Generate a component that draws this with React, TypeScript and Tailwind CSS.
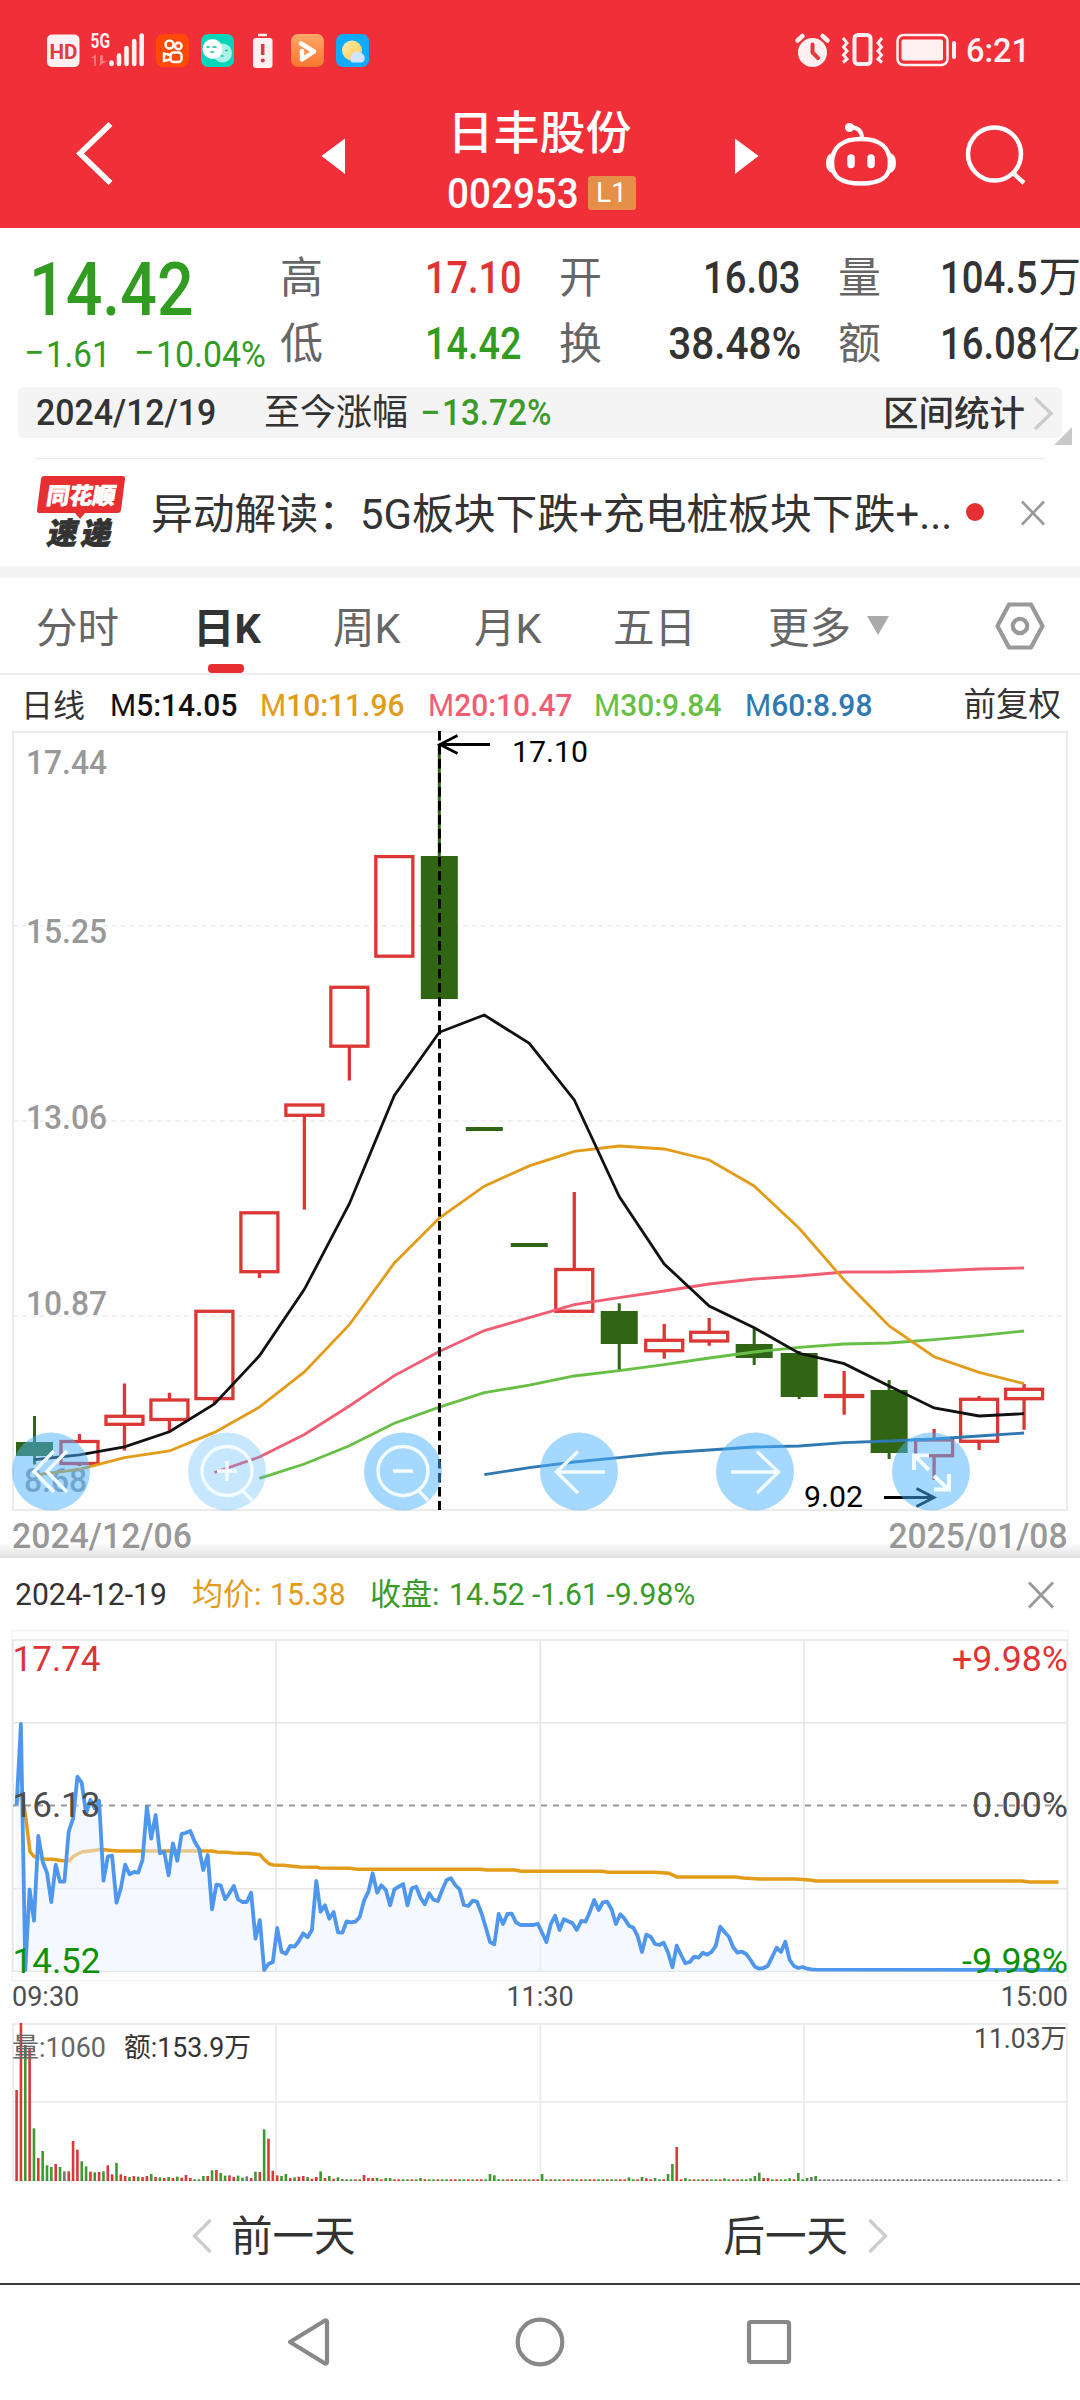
import React from 'react';
import clsx from 'clsx';

const UP = '#db3734';
const DOWN = '#306613';

// [direction, high, body top, body bottom, low]
type Candle = ['up' | 'down', number, number, number, number];

const candles: Candle[] = [
  ['down', 1416, 1442, 1456, 1464.5],
  ['up', 1434, 1441.5, 1463.5, 1466],
  ['up', 1383.6, 1416.3, 1424.3, 1450.6],
  ['up', 1392.7, 1400, 1419.5, 1432],
  ['up', 1311, 1311.3, 1398.6, 1404],
  ['up', 1212.8, 1212.8, 1271.7, 1278],
  ['up', 1105, 1105, 1115.3, 1209.6],
  ['up', 987.3, 987.3, 1046.2, 1080.5],
  ['up', 856.6, 856.6, 956.2, 956.2],
  ['down', 744, 856, 999, 999],
  ['down', 1127, 1127, 1131, 1131],
  ['down', 1243, 1243, 1247, 1247],
  ['up', 1192, 1269.5, 1311.3, 1311.3],
  ['down', 1303.3, 1311, 1344, 1370],
  ['up', 1324, 1340.3, 1350.7, 1358.7],
  ['up', 1318, 1332.3, 1341, 1345.7],
  ['down', 1328.3, 1344, 1358, 1365],
  ['down', 1351, 1353, 1397, 1399],
  ['up', 1371, 1395.5, 1396.5, 1414.7],
  ['down', 1380, 1390, 1453, 1459],
  ['up', 1429, 1440, 1455.7, 1480],
  ['up', 1396, 1399.3, 1441.3, 1450],
  ['up', 1384, 1389.3, 1398.7, 1429.7],
];

const averages = [
  { color: '#2f78b0', start: 10, ys: [1474.7, 1467.7, 1462, 1457.7, 1453, 1450, 1447, 1446, 1442.7, 1441, 1439, 1436, 1433] },
  { color: '#67bf45', start: 5, ys: [1478.4, 1464, 1445.8, 1423.3, 1407.2, 1392.7, 1385.2, 1376, 1370.7, 1364.7, 1358, 1352, 1347.3, 1344, 1343, 1339.7, 1335.7, 1331] },
  { color: '#f15d72', start: 4, ys: [1472.5, 1457, 1434.5, 1406, 1375.6, 1351.5, 1330.6, 1317.7, 1304.7, 1297.7, 1291, 1284, 1279, 1276, 1272, 1272, 1271, 1269, 1268] },
  { color: '#e29c19', start: 0, ys: [1475, 1469.3, 1457.6, 1451, 1432.4, 1407.2, 1371.9, 1324.7, 1263, 1218, 1186.1, 1165.9, 1151.3, 1146, 1149, 1160, 1186, 1228.3, 1280, 1326, 1356.7, 1372.3, 1383.7] },
  { color: '#111', start: 0, ys: [1459.7, 1454.9, 1446.8, 1431.8, 1404, 1355.8, 1289.4, 1203.7, 1095.5, 1032.3, 1015, 1043.4, 1100, 1196.5, 1264, 1306, 1327.7, 1353.3, 1363.7, 1386, 1408, 1416, 1413.7] },
];

const dayX = (i: number) => 34.5 + i * 44.98;
const minuteX = (i: number) => 16.6 + i * 4.343;

// minute prices, in thirds of a pixel from the top of the panel
const quotes = [
  736, 492, 1230, 988, 1082, 828, 905, 938, 1026, 914, 965, 965, 815, 775, 650, 668, 760, 720, 745, 722,
  962, 890, 887, 1028, 985, 914, 943, 936, 938, 900, 740, 836, 765, 880, 876, 946, 850, 902, 822, 818,
  813, 845, 866, 930, 885, 1048, 974, 976, 1018, 1000, 978, 1018, 1026, 1026, 998, 1136, 1080, 1230, 1212, 1206,
  1104, 1175, 1181, 1158, 1160, 1143, 1120, 1132, 1110, 963, 1055, 1036, 1076, 1056, 1117, 1118, 1084, 1087, 1085, 1071,
  1022, 995, 940, 998, 976, 990, 1036, 988, 980, 972, 1036, 985, 980, 1013, 1033, 1000, 1019, 1023, 990, 960,
  955, 975, 988, 1035, 1038, 1022, 1025, 1058, 1100, 1146, 1153, 1062, 1092, 1062, 1061, 1087, 1095, 1095, 1095, 1095,
  1091, 1118, 1146, 1092, 1067, 1110, 1078, 1084, 1090, 1110, 1083, 1085, 1055, 1020, 1050, 1027, 1025, 1048, 1092, 1063,
  1076, 1097, 1103, 1128, 1176, 1124, 1130, 1152, 1155, 1148, 1178, 1222, 1157, 1185, 1210, 1206, 1190, 1193, 1178, 1184,
  1176, 1157, 1100, 1116, 1130, 1162, 1178, 1175, 1182, 1200, 1220, 1226, 1224, 1217, 1190, 1163, 1176, 1145, 1200, 1218,
  1224, 1221, 1226, 1228, 1229,
];

// [x, y] of the average price line
const avgLine = [
  [16.6, 1805], [21, 1790], [25.6, 1816], [30, 1851.7], [34, 1856.5], [43, 1859], [52, 1859.3], [65, 1861], [69, 1861],
  [73, 1856.7], [78, 1853.7], [82, 1852], [99, 1849.7], [104, 1849.7], [117, 1851], [212, 1851], [217, 1852], [227, 1852.3],
  [233, 1853], [247, 1853.3], [260, 1854.7], [264, 1859.3], [269, 1863.7], [273, 1865], [283, 1865.3], [300, 1867],
  [317, 1867.3], [320, 1868], [350, 1868.3], [357, 1869.3], [480, 1869.3], [487, 1870], [515, 1870], [521, 1871.3],
  [602, 1871.3], [608, 1872.3], [654, 1872.3], [669, 1873.3], [677, 1877], [736, 1877], [743, 1878], [760, 1879],
  [795, 1879], [810, 1880], [816, 1881], [1022, 1881], [1029, 1882], [1058.5, 1882],
];

const volumeTops = [
  270, 69, 135, 143, 385, 474, 453, 496, 501, 492, 501, 514, 514, 423, 449, 484, 499, 515, 517, 516,
  514, 496, 523, 489, 523, 528, 531, 528, 530, 531, 528, 522, 531, 532, 534, 531, 534, 530, 533, 525,
  534, 538, 538, 528, 528, 511, 510, 519, 527, 526, 531, 527, 533, 529, 534, 515, 516, 388, 416, 512,
  526, 528, 522, 534, 532, 530, 528, 531, 536, 531, 514, 534, 528, 536, 532, 537,
];
const volumeSides = 'RRGRGRGGGRGKRRRGGRGRGRRGRRGRGRRGRGRGRGRRRGGGRGRGGRRGGKRGRGRRRGGRGRRGRRGRGRGK';
const quietSides = 'RGRRGGRGGRRGG';
const volumeSpikes: Record<number, [string, number]> = {
  80: ['R', 525], 81: ['R', 534], 82: ['R', 534], 83: ['G', 534], 85: ['G', 534], 86: ['G', 534], 93: ['G', 534],
  109: ['G', 522], 110: ['G', 526], 121: ['G', 522], 141: ['G', 532], 144: ['G', 531], 145: ['R', 535], 147: ['G', 534],
  150: ['G', 522], 151: ['G', 492], 152: ['R', 441], 154: ['G', 534], 163: ['G', 535], 169: ['G', 535], 170: ['G', 528],
  171: ['G', 518], 172: ['R', 534], 173: ['R', 534], 178: ['G', 535], 180: ['G', 519], 182: ['G', 534], 183: ['K', 531],
  184: ['G', 528],
};
const sideColor: Record<string, string> = { R: '#d8393a', G: '#3c9a2f', K: '#777' };

const volumeBar = (i: number): [string, number] => {
  if (i < volumeTops.length) return [volumeSides[i], volumeTops[i]];
  if (volumeSpikes[i]) return volumeSpikes[i];
  return [i > 184 ? 'K' : quietSides[i % quietSides.length], 538];
};

const StatusBar: React.FC = () => (
  <div className="h-[100px]">
    <svg width="1080" height="100" fontFamily="Roboto, sans-serif">
      <rect x="47" y="34.500" width="32.500" height="32.500" rx="5" fill="#fff1f2" />
      <text x="49.500" y="58.500" fontSize="21" fontWeight="700" fill="#e23a40" textLength="28" lengthAdjust="spacingAndGlyphs">HD</text>
      <text x="90.500" y="48" fontSize="20.500" fontWeight="700" fill="#fff1f2" textLength="19.500" lengthAdjust="spacingAndGlyphs">5G</text>
      <path d="M94 66V58H91L96 54V66ZM100 55V63L99 66L107 61H103V55Z" fill="#f8757a" />
      <path d="M111.500 62.500V64M119 55.500V64M126.500 48V64M134.200 41V64M141.700 35.500V64" stroke="#fff1f2" strokeWidth="4.600" strokeLinecap="round" />

      <rect x="156" y="34" width="33" height="33" rx="7" fill="#ff4906" />
      <g fill="none" stroke="#fff" strokeWidth="2.400">
        <circle cx="169.500" cy="44.500" r="4" />
        <circle cx="178.300" cy="46" r="3.300" />
        <rect x="170.500" y="52.500" width="11" height="9.500" rx="3" />
        <path d="M170 55L164 53.500V61L170 59.500" />
      </g>

      <rect x="201" y="34" width="33" height="33" rx="7" fill="#04d5b8" />
      <circle cx="222.500" cy="53" r="9.500" fill="#aaf3e6" />
      <circle cx="212.500" cy="49" r="10" fill="#fff" />
      <path d="M206.500 47.500Q208 46 209.500 47.500M212.500 47.500Q214.500 46 216.500 47.500M210.500 51.500Q212 53 214 51.500M225 50.500h2.500M221 56h2.500" fill="none" stroke="#04bfa6" strokeWidth="1.500" />

      <path d="M258 35h9" stroke="#fff1f2" strokeWidth="2.500" />
      <rect x="253" y="38" width="19.500" height="30" rx="3" fill="#fff1f2" />
      <path d="M262.700 44V55" stroke="#e23a40" strokeWidth="3.500" />
      <circle cx="262.700" cy="60.500" r="2" fill="#e23a40" />

      <defs>
        <linearGradient id="play" x1="0" y1="0" x2="0" y2="1">
          <stop offset="0" stopColor="#ffa869" />
          <stop offset="1" stopColor="#f8762d" />
        </linearGradient>
        <linearGradient id="sun" x1="0" y1="0" x2="1" y2="1">
          <stop offset="0" stopColor="#fff0b0" />
          <stop offset="1" stopColor="#ffc64a" />
        </linearGradient>
      </defs>
      <rect x="291" y="34" width="33" height="33" rx="7" fill="url(#play)" />
      <path d="M301 43.500L314 51.500L302 59.500V51" fill="none" stroke="#fff" strokeWidth="4.500" strokeLinecap="round" strokeLinejoin="round" />

      <rect x="336" y="34" width="33" height="33" rx="7" fill="#0fabff" />
      <circle cx="352" cy="50.500" r="10" fill="url(#sun)" />
      <path d="M352 62.500a5 5 0 0 1 0-8a6 6 0 0 1 10 -1a5 5 0 0 1 0 9z" fill="#d5e2fb" />

      <circle cx="812.500" cy="52.500" r="14.500" fill="#fff1f2" />
      <path d="M797.500 40.500L802.500 36M827.500 40.500L822.500 36" stroke="#fff1f2" strokeWidth="4.500" strokeLinecap="round" />
      <path d="M812.500 44.500V52.500L818 58" fill="none" stroke="#e23a40" strokeWidth="4" strokeLinecap="round" strokeLinejoin="round" />

      <rect x="854.500" y="35" width="16" height="29" rx="3.500" fill="none" stroke="#fff1f2" strokeWidth="4" />
      <path d="M843 38L847 43L843.500 47L847 51L843.500 55L847 59L843 62.500M882 38L878 43L881.500 47L878 51L881.500 55L878 59L882 62.500" fill="none" stroke="#fff1f2" strokeWidth="3" />

      <rect x="897.500" y="35" width="50" height="30" rx="6" fill="none" stroke="#fff1f2" strokeWidth="2.500" />
      <rect x="901.500" y="39.500" width="41.500" height="21" rx="2" fill="#fff1f2" />
      <rect x="952" y="41" width="4" height="18" rx="2" fill="#fff1f2" />
      <text x="966" y="62" fontSize="34" fontWeight="500" fill="#fff1f2" textLength="64" lengthAdjust="spacingAndGlyphs">6:21</text>
    </svg>
  </div>
);

const Header: React.FC = () => (
  <header className="h-[228px] bg-[#f12f38] text-white">
    <StatusBar />
    <div className="flex h-[128px]">
      <svg width="440" height="128" viewBox="0 100 440 128">
        <path d="M110.500 124L80 153.500L110.500 183" fill="none" stroke="#fff" strokeWidth="5.500" />
        <path d="M321.500 156L345 138.500V174Z" fill="#fff" />
      </svg>
      <div className="w-[202px] flex flex-col items-center">
        <div className="mt-[7px] -ml-[3px] h-[52px] leading-[52px] text-[46px] font-medium whitespace-nowrap">日丰股份</div>
        <div className="mt-[14px] h-[38px] flex items-start">
          <span className="w-[130px] h-9 text-[42px] leading-[42px] font-medium">
            <span className="inline-block origin-left scale-x-[.92]">002953</span>
          </span>
          <span className="ml-[11px] mt-[3px] w-12 h-[34px] rounded-[3px] bg-[#e58f49] text-[28px] leading-[34px] text-center">L1</span>
        </div>
      </div>
      <svg width="438" height="128" viewBox="642 100 438 128" fill="none" stroke="#fff">
        <path d="M735 138.500L758.500 156L735 174Z" fill="#fff" stroke="none" />
        <path d="M861 139C879 139 890 147 890 163C890 178 880 183.500 861 183.500C842 183.500 832 178 832 163C832 147 843 139 861 139Z" strokeWidth="4.500" />
        <path d="M862 139C862 131 858 127 850 127" strokeWidth="4" />
        <circle cx="849.500" cy="127.500" r="4.500" fill="#fff" stroke="none" />
        <path d="M832 154C825 155 825 170 832 172ZM890 154C897 155 897 170 890 172Z" fill="#fff" strokeWidth="1.500" />
        <path d="M851 158V164.500M871 158V164.500" strokeWidth="7.500" strokeLinecap="round" />
        <ellipse cx="994.500" cy="154" rx="26.500" ry="26.500" strokeWidth="4.500" />
        <path d="M1013 173L1024 183" strokeWidth="4.500" />
      </svg>
    </div>
  </header>
);

interface Stat {
  label: string;
  value: string;
  unit?: string;
  style: string;
}

const stats: Stat[][] = [
  [
    { label: '高', value: '17.10', style: 'text-[#e03434] scale-x-[.85]' },
    { label: '低', value: '14.42', style: 'text-[#329b21] scale-x-[.85]' },
  ],
  [
    { label: '开', value: '16.03', style: 'text-[#333] scale-x-[.86]' },
    { label: '换', value: '38.48%', style: 'text-[#333] scale-x-[.91]' },
  ],
  [
    { label: '量', value: '104.5', unit: '万', style: 'text-[#333] scale-x-[.86]' },
    { label: '额', value: '16.08', unit: '亿', style: 'text-[#333] scale-x-[.86]' },
  ],
];

const StatCell: React.FC<Stat> = ({ label, value, unit, style }) => (
  <div className="h-[66px] flex items-center">
    <span className="mr-auto text-[43px] text-[#666]">{label}</span>
    <span className={clsx('text-[44.5px] font-medium whitespace-nowrap origin-right', style)}>{value}</span>
    {unit && <span className="ml-px text-[42.5px] text-[#333] -mr-px">{unit}</span>}
  </div>
);

const Quote: React.FC = () => (
  <section className="h-[159px] flex">
    <div className="w-[279px] shrink-0 text-[#329b21]">
      <div className="mt-[19px] ml-[29px] h-[86px] leading-[84px] text-[75px] font-medium origin-left scale-x-[.86]">14.42</div>
      <div className="flex h-[44px] leading-[44px] ml-[24px] text-[36px]">
        <span className="w-[110px] flex"><i className="not-italic w-[22px] -mt-[2px]">−</i><span className="origin-left scale-x-[.92]">1.61</span></span>
        <span className="flex"><i className="not-italic w-[22px] -mt-[2px]">−</i><span className="origin-left scale-x-[.94]">10.04%</span></span>
      </div>
    </div>
    <div className="mt-[17px] flex gap-[37px] pl-px">
      {stats.map((column) => (
        <div key={column[0].label} className="w-[242px]">
          {column.map((s) => (
            <StatCell key={s.label} {...s} />
          ))}
        </div>
      ))}
    </div>
  </section>
);

const RangeBar: React.FC = () => (
  <section className="relative h-[72px] px-[18px]">
    <div className="h-[51px] rounded-md bg-[#f4f4f4] flex items-center text-[#333] pl-[18px] pr-2">
      <span className="w-[228px] text-[36px] font-medium"><span className="inline-block origin-left scale-x-[.94]">2024/12/19</span></span>
      <span className="text-[36px] whitespace-nowrap">至今涨幅</span>
      <span className="ml-[12px] text-[36px] font-medium text-[#3a9b2a] flex"><i className="not-italic w-[22px]">−</i><span className="origin-left scale-x-[.925]">13.72%</span></span>
      <span className="ml-auto mr-[5px] mt-[5px] text-[35.500px] font-medium">区间统计</span>
      <svg width="24" height="36" fill="none"><path d="M5 3L21 18.500L5 34" stroke="#ccc" strokeWidth="3.500" /></svg>
    </div>
    <svg className="absolute left-[1054px] top-[40px]" width="18" height="18"><path d="M18 0V18H0Z" fill="#c9c9c9" /></svg>
    <div className="mx-[18px] mt-5 h-px bg-[#e8e8e8]" />
  </section>
);

const News: React.FC = () => (
  <section className="h-[107px] flex items-center text-[#333]">
    <svg className="ml-9 shrink-0" width="92" height="80" viewBox="36 473 92 80" fontFamily="'Noto Sans CJK SC', sans-serif" fontWeight="900">
      <path d="M44.500 476H122Q125.500 476 125 479L121 510Q120.500 513 117.500 513H85L80 519L75 513H40Q36.500 513 37 510L41 479Q41.500 476 44.500 476Z" fill="#e72e30" />
      <text transform="translate(45.500 503.500) skewX(-9)" fontSize="23" fill="#fff" stroke="#fff" strokeWidth=".6" textLength="69">同花顺</text>
      <text transform="translate(46 544) skewX(-12)" fontSize="30" fill="#333" stroke="#333" strokeWidth=".9" textLength="64">速递</text>
    </svg>
    <span className="ml-[23px] w-[800px] mt-[5px] text-[41.8px] whitespace-nowrap">异动解读：5G板块下跌+充电桩板块下跌+...</span>
    <span className="ml-[15px] -mt-px size-[18px] rounded-full bg-[#e72e30]" />
    <svg className="ml-[36px]" width="26" height="26" fill="none"><path d="M2 1.500L24 24.500M24 1.500L2 24.500" stroke="#999" strokeWidth="2.600" /></svg>
  </section>
);

const tabs = [
  { label: '分时', width: 'w-[157px]' },
  { label: '日K', width: 'w-[140px]', active: true },
  { label: '周K', width: 'w-[141px]' },
  { label: '月K', width: 'w-[139px]' },
  { label: '五日', width: 'w-[155px]' },
  { label: '更多', width: 'w-[98px]' },
];

const Tabs: React.FC = () => (
  <nav className="h-[97px] border-b-2 border-[#ececec] flex items-center pl-[36px] text-[41.5px] text-[#666]">
    {tabs.map((tab) => (
      <div key={tab.label} className={clsx('relative shrink-0 whitespace-nowrap h-full leading-[101px]', tab.width, tab.active && 'font-bold text-[#333]')}>
        {tab.label}
        {tab.active && <span className="absolute left-[15px] bottom-0 w-9 h-[9px] rounded-[4px] bg-[#e72e30]" />}
      </div>
    ))}
    <svg width="24" height="20"><path d="M1 0H23L12 19Z" fill="#aaa" /></svg>
    <svg className="ml-[104px]" width="52" height="50" fill="none" stroke="#999" strokeWidth="4.200" strokeLinejoin="round">
      <path d="M15 3.500H37L48.500 25L37 46.500H15L3.500 25Z" />
      <circle cx="26" cy="25" r="7.200" />
    </svg>
  </nav>
);

const legend = [
  { text: '5:14.05', style: 'text-[#111] w-[150px]' },
  { text: '10:11.96', style: 'text-[#e29c19] w-[168px]' },
  { text: '20:10.47', style: 'text-[#f15d72] w-[166px]' },
  { text: '30:9.84', style: 'text-[#67bf45] w-[151px]' },
  { text: '60:8.98', style: 'text-[#2f78b0] w-[150px]' },
];

const Legend: React.FC = () => (
  <div className="h-[56px] pt-[5px] flex items-center pl-[21px] pr-[19px] text-[32px] text-[#333]">
    <span className="w-[89px]">日线</span>
    {legend.map((item) => (
      <span key={item.text} className={clsx('text-[31.5px] font-medium', item.style)}>
        <span className="inline-block origin-left scale-x-[.95]"><span className="font-normal">M</span>{item.text}</span>
      </span>
    ))}
    <span className="ml-auto text-[32.5px]">前复权</span>
  </div>
);

const axis: [string, number][] = [['17.44', 773.5], ['15.25', 943], ['13.06', 1129], ['10.87', 1314.5], ['8.68', 1492]];

const KLine: React.FC = () => (
  <svg className="block" width="1080" height="829" viewBox="0 731 1080 829" fontFamily="Roboto, sans-serif" fill="none">
    <rect x="13" y="732" width="1054" height="778" stroke="#ebebeb" strokeWidth="2" />
    {[925.7, 1121, 1316].map((y) => (
      <path key={y} d={`M13 ${y}H1067`} stroke="#ebebeb" strokeWidth="1.500" strokeDasharray="4.500 4.500" />
    ))}
    {axis.map(([label, y]) => (
      <text key={label} x={label.length > 4 ? 26 : 24} y={y} fontSize="34" fontWeight="500" fill="#999" textLength={label.length > 4 ? 81 : 63} lengthAdjust="spacingAndGlyphs">{label}</text>
    ))}
    {candles.map(([side, high, top, bottom, low], i) => {
      const x = dayX(i);
      return side === 'up' ? (
        <g key={i} stroke={UP} strokeWidth="3.300">
          <path d={`M${x} ${high}V${top}M${x} ${bottom}V${low}`} />
          <rect x={x - 18.5} y={top} width="37" height={bottom - top} />
        </g>
      ) : (
        <g key={i} fill={DOWN}>
          <rect x={x - 1.5} y={high} width="3" height={low - high} />
          <rect x={x - 18.5} y={top} width="37" height={bottom - top} />
        </g>
      );
    })}
    {averages.map(({ color, start, ys }) => (
      <polyline key={color} points={ys.map((y, i) => `${dayX(start + i)},${y}`).join(' ')} stroke={color} strokeWidth="2.800" />
    ))}
    <path d="M439.500 731V1510" stroke="#000" strokeWidth="3" strokeDasharray="9.500 4.500" />
    <g stroke="#000" strokeWidth="2.800">
      <path d="M490 744.500H441M457.500 735.500L440 744.500L457.500 753.500" />
      <path d="M884 1497.500H933M916.500 1488.500L934 1497.500L916.500 1506.500" />
    </g>
    <text x="512" y="761.500" fontSize="30" fill="#000" textLength="76" lengthAdjust="spacingAndGlyphs">17.10</text>
    <text x="804" y="1506.500" fontSize="30" fill="#000" textLength="59" lengthAdjust="spacingAndGlyphs">9.02</text>
    <g fill="#49b2ff">
      {[51, 227, 403, 579, 755, 931].map((cx) => (
        <circle key={cx} cx={cx} cy="1471.500" r="39" opacity={cx === 227 ? 0.3 : 0.5} />
      ))}
    </g>
    <g stroke="#f3fcff" strokeWidth="3.400">
      <path d="M54 1451L34 1471.500L54 1492M67 1451L47 1471.500L67 1492" />
      <ellipse cx="227" cy="1471" rx="25" ry="24.500" />
      <path d="M242 1490L252 1500.500M217 1471H237M227 1461V1481" />
      <ellipse cx="403" cy="1471" rx="25" ry="24.500" />
      <path d="M418 1490L428 1500.500M393 1471H413" />
      <path d="M605 1472H557M578 1451.500L556.500 1472L578 1493" />
      <path d="M731 1472H778M757 1451.500L778.500 1472L757 1493" />
      <path d="M929 1470L915 1456M914 1470V1455.500H929M934 1476L948 1489M949 1474V1489.500H934" strokeWidth="4" />
    </g>
    <g fontSize="34.500" fontWeight="500" fill="#999">
      <text x="12" y="1547.500" textLength="180" lengthAdjust="spacingAndGlyphs">2024/12/06</text>
      <text x="888.500" y="1547.500" textLength="179" lengthAdjust="spacingAndGlyphs">2025/01/08</text>
    </g>
    <defs>
      <linearGradient id="shade" x1="0" y1="0" x2="0" y2="1">
        <stop offset="0" stopColor="#000" stopOpacity="0" />
        <stop offset="1" stopColor="#000" stopOpacity=".12" />
      </linearGradient>
    </defs>
    <rect x="0" y="1543" width="1080" height="15" fill="url(#shade)" />
  </svg>
);

const DayHeader: React.FC = () => (
  <div className="h-[70px] flex items-center pl-[15px] pr-[25px] text-[31px] whitespace-pre">
    <span className="w-[177px] text-[#333]"><span className="inline-block origin-left scale-x-[.97]">2024-12-19</span></span>
    <span className="w-[178px] text-[#e29c19]">均价: <span className="inline-block ml-px origin-left scale-x-[.97]">15.38</span></span>
    <span className="text-[#3a9b2a]">收盘: <span className="inline-block ml-[2px] origin-left scale-x-[.97]">14.52 -1.61 -9.98%</span></span>
    <svg className="ml-auto" width="28" height="28" fill="none"><path d="M2 1.500L26 26.500M26 1.500L2 26.500" stroke="#999" strokeWidth="2.800" /></svg>
  </div>
);

const Intraday: React.FC = () => {
  const line = [...quotes.map((v, i) => `${minuteX(i).toFixed(1)},${(1560 + v / 3).toFixed(1)}`), '1058.5,1970'].join(' ');
  return (
    <svg className="block" width="1080" height="390" viewBox="0 1630 1080 390" fontFamily="Roboto, sans-serif" fill="none">
      <rect x="12" y="1630.500" width="1056" height="350" stroke="#f4f4f4" strokeWidth="1.500" />
      <path d="M13 1640H1067V1971.300H13ZM13 1722.700H1067M13 1888.700H1067M276 1640V1971M540.300 1640V1971M804 1640V1971" stroke="#e6e6e6" strokeWidth="1.600" />
      <path d="M13 1805.500H1067" stroke="#999" strokeWidth="2" strokeDasharray="6 6" />
      <polyline points={avgLine.map((p) => p.join(',')).join(' ')} stroke="#e29c19" strokeWidth="3.500" />
      <polygon points={`16.6,1971 ${line} 1058.5,1971`} fill="#ebf4ff" fillOpacity=".5" />
      <polyline points={line} stroke="#4f97ec" strokeWidth="3.800" strokeLinejoin="round" />
      <g fontSize="35">
        <text x="12.500" y="1670.700" fill="#e03434" textLength="88" lengthAdjust="spacingAndGlyphs">17.74</text>
        <text x="12.500" y="1816.700" fill="#4d4d4d" textLength="88" lengthAdjust="spacingAndGlyphs">16.13</text>
        <text x="12.500" y="1973" fill="#0b9209" textLength="88" lengthAdjust="spacingAndGlyphs">14.52</text>
        <text x="952" y="1670.700" fill="#e03434" textLength="116" lengthAdjust="spacingAndGlyphs">+9.98%</text>
        <text x="972" y="1816.700" fill="#4d4d4d" textLength="96" lengthAdjust="spacingAndGlyphs">0.00%</text>
        <text x="962" y="1973" fill="#0b9209" textLength="106" lengthAdjust="spacingAndGlyphs">-9.98%</text>
      </g>
      <g fontSize="27" fill="#4d4d4d">
        <text x="12" y="2005.500">09:30</text>
        <text x="540" y="2005.500" textAnchor="middle">11:30</text>
        <text x="1068" y="2005.500" textAnchor="end">15:00</text>
      </g>
    </svg>
  );
};

const Volume: React.FC = () => (
  <svg className="block" width="1080" height="170" viewBox="0 2020 1080 170" fontFamily="Roboto, 'Noto Sans CJK SC', sans-serif" fill="none">
    <path d="M13 2024H1067V2180.500H13ZM13 2102H1067M276 2024V2180M540.300 2024V2180M804 2024V2180" stroke="#e9e9e9" strokeWidth="1.600" />
    {Array.from({ length: 241 }, (_, i) => {
      if (i === 239) return null;
      const [side, top] = volumeBar(i);
      return <rect key={i} x={minuteX(i) - 1.3} y={2000 + top / 3} width="2.600" height={(543 - top) / 3} fill={sideColor[side]} />;
    })}
    <g fontSize="27">
      <text x="12" y="2057" fill="#666" textLength="94" lengthAdjust="spacingAndGlyphs">量:1060</text>
      <text x="124" y="2057" fill="#333" textLength="127" lengthAdjust="spacingAndGlyphs">额:153.9万</text>
      <text x="974" y="2048" fill="#4d4d4d" textLength="93" lengthAdjust="spacingAndGlyphs">11.03万</text>
    </g>
  </svg>
);

const DaySwitch: React.FC = () => (
  <div className="h-[93px] flex items-center text-[41.5px] leading-none text-[#333] px-[191px] justify-between">
    <div className="flex items-center gap-[18px]">
      <svg width="22" height="36" fill="none"><path d="M19.500 1L3.500 17L19.500 33" stroke="#ccc" strokeWidth="3.200" /></svg>
      前一天
    </div>
    <div className="flex items-center gap-[19px]">
      后一天
      <svg width="22" height="36" fill="none"><path d="M2.500 1L18.500 17L2.500 33" stroke="#ccc" strokeWidth="3.200" /></svg>
    </div>
  </div>
);

const NavBar: React.FC = () => (
  <footer className="h-[117px] border-t-2 border-[#3a3a3a] flex justify-center">
    <svg width="1080" height="115" viewBox="0 2285 1080 115" fill="none" stroke="#888" strokeWidth="4.200" strokeLinejoin="round">
      <path d="M290 2342L325 2320.500Q327 2320 327 2322V2362Q327 2364 325 2363.500Z" />
      <circle cx="540" cy="2342" r="22.300" />
      <rect x="749" y="2322" width="40" height="40" rx="2" />
    </svg>
  </footer>
);

const App: React.FC = () => {
  return (
    <div className="w-[1080px] h-[2400px] overflow-hidden bg-[#fefefe] font-[Roboto,'Noto_Sans_CJK_SC',sans-serif]">
      <Header />
      <Quote />
      <RangeBar />
      <News />
      <div className="h-3 bg-[#f4f4f4]" />
      <Tabs />
      <Legend />
      <KLine />
      <DayHeader />
      <Intraday />
      <Volume />
      <DaySwitch />
      <NavBar />
    </div>
  );
};

export default App;
